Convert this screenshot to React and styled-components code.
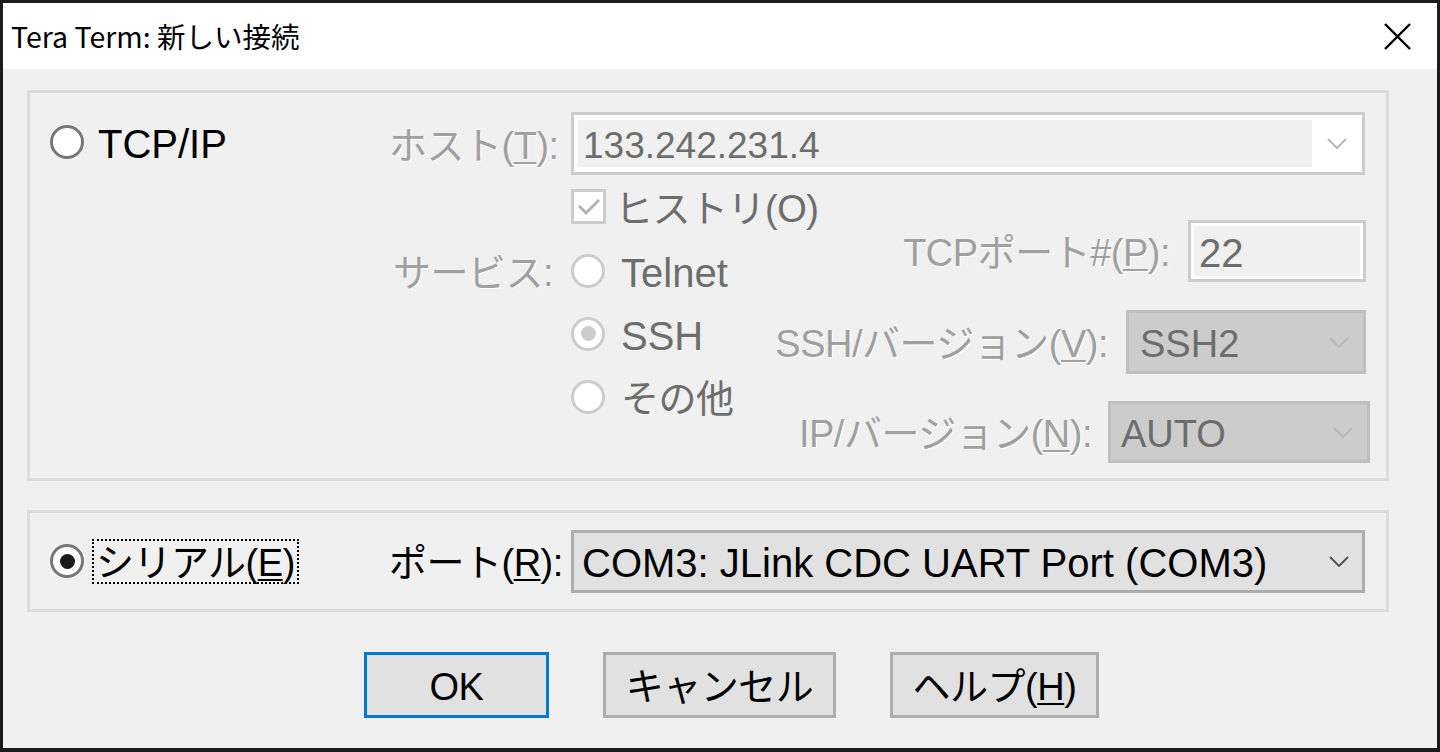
import React from 'react';
import styled, { createGlobalStyle } from 'styled-components';

const FONT = `"Liberation Sans", "Noto Sans CJK JP", sans-serif`;

const Global = createGlobalStyle`
  html, body { margin: 0; padding: 0; width: 1440px; height: 752px; overflow: hidden; background: #1c1c1c; }
  #root { width: 1440px; height: 752px; }
`;

const Window = styled.div`
  box-sizing: border-box;
  width: 1440px;
  height: 752px;
  border: 3px solid #1c1c1c;
  border-bottom-width: 4px;
  display: flex;
  flex-direction: column;
  font-family: ${FONT};
  font-size: 38px;
  color: #000;
`;

const TitleBar = styled.div`
  height: 66px;
  flex: none;
  background: #fff;
  display: flex;
  align-items: center;
  justify-content: space-between;
  padding: 0 26px 0 8px;
`;

const Title = styled.span`
  font-family: "Noto Sans CJK JP", sans-serif;
  font-size: 28.5px;
  line-height: 1;
  color: #000;
`;

const CloseBtn = styled.svg`
  width: 27px;
  height: 27px;
  display: block;
`;

const Body = styled.div`
  flex: 1;
  background: #f0f0f0;
  padding: 21px 48px 0 24px;
  display: flex;
  flex-direction: column;
`;

const Group = styled.div`
  box-sizing: border-box;
  border: 3px solid #dcdcdc;
  height: ${(p) => p.$h}px;
  margin-top: ${(p) => p.$mt || 0}px;
  display: flex;
  align-items: ${(p) => p.$align || 'stretch'};
`;

const LeftCol = styled.div`
  width: 359px;
  flex: none;
  box-sizing: border-box;
  padding-left: 20px;
  padding-top: ${(p) => p.$pt || 0}px;
  display: flex;
  align-items: ${(p) => (p.$pt ? 'flex-start' : 'center')};
`;

const RightCol = styled.div`
  flex: 1;
  display: flex;
  flex-direction: column;
  padding-top: 19px;
`;

const Row = styled.div`
  display: flex;
  align-items: center;
  height: ${(p) => p.$h}px;
  margin-top: ${(p) => p.$mt || 0}px;
  padding-left: ${(p) => p.$pl || 0}px;
  margin-right: ${(p) => p.$mr || 0}px;
  gap: ${(p) => p.$gap || 0}px;
`;

const Label = styled.span`
  white-space: nowrap;
  line-height: 1;
  padding-top: 4px;
  color: ${(p) => (p.$disabled ? '#a0a0a0' : '#000')};
  text-shadow: ${(p) => (p.$disabled ? '1px 1px 0 #fff' : 'none')};
  letter-spacing: -0.5px;
`;

const FieldLabel = styled(Label)`
  width: 164px;
  flex: none;
  text-align: right;
  margin-right: 18px;
`;

const Under = styled.span`
  text-decoration: underline;
  text-decoration-thickness: 2px;
  text-underline-offset: 3px;
`;

const OptionText = styled.span`
  white-space: nowrap;
  line-height: 1;
  padding-top: 4px;
  font-size: ${(p) => (p.$latin ? 40 : 38)}px;
  color: ${(p) => (p.$disabled ? '#6d6d6d' : '#000')};
  letter-spacing: ${(p) => (p.$latin ? 0 : -0.5)}px;
`;

const RadioItem = styled.div`
  display: flex;
  align-items: center;
  gap: ${(p) => p.$gap || 14}px;
  height: ${(p) => p.$h || 40}px;
`;

const RadioCircle = styled.span`
  box-sizing: border-box;
  width: 34px;
  height: 34px;
  flex: none;
  border-radius: 50%;
  border: 3px solid ${(p) => (p.$disabled ? '#cccccc' : '#777777')};
  background: #fff;
  display: flex;
  align-items: center;
  justify-content: center;
  &::after {
    content: '';
    display: ${(p) => (p.$checked ? 'block' : 'none')};
    width: 15px;
    height: 15px;
    border-radius: 50%;
    background: ${(p) => (p.$disabled ? '#cccccc' : '#1a1a1a')};
  }
`;

const FocusLabel = styled.span`
  box-sizing: border-box;
  height: 45px;
  display: flex;
  align-items: center;
  padding: 0 2px;
  border: 2px dotted #000;
  margin-left: -6px;
`;

const CheckBox = styled.span`
  box-sizing: border-box;
  width: 35px;
  height: 35px;
  flex: none;
  border: 3px solid #cccccc;
  background: #fff;
  display: flex;
  align-items: center;
  justify-content: center;
`;

const Combo = styled.div`
  box-sizing: border-box;
  width: ${(p) => p.$w}px;
  height: ${(p) => p.$h}px;
  flex: none;
  border: 3px solid ${(p) => p.$border};
  background: ${(p) => p.$bg};
  display: flex;
  align-items: center;
  padding: ${(p) => p.$pad || '0 13px 0 8px'};
`;

const ComboText = styled.span`
  flex: 1;
  white-space: nowrap;
  line-height: 1;
  padding-top: 4px;
  font-size: ${(p) => p.$size || 40}px;
  color: ${(p) => p.$color || '#000'};
`;

const EditArea = styled.div`
  flex: 1;
  height: 47px;
  background: #f0f0f0;
  display: flex;
  align-items: center;
  padding-left: 5px;
`;

const ArrowArea = styled.div`
  width: 50px;
  display: flex;
  justify-content: center;
`;

const PortBox = styled.div`
  box-sizing: border-box;
  width: 178px;
  height: 62px;
  flex: none;
  border: 3px solid #cccccc;
  outline: 3px solid #fff;
  outline-offset: -6px;
  background: #f0f0f0;
  display: flex;
  align-items: center;
  padding-left: 8px;
`;

const ServiceBlock = styled.div`
  display: flex;
  margin-top: -4px;
`;

const ServiceLabelCol = styled.div`
  width: 164px;
  margin-right: 18px;
  padding-top: 19px;
  flex: none;
  display: flex;
  justify-content: flex-end;
`;

const ServiceLabelBox = styled.div`
  height: 63px;
  display: flex;
  align-items: center;
`;

const RadioCol = styled.div`
  display: flex;
  flex-direction: column;
  padding-top: 19px;
`;

const RightBlock = styled.div`
  flex: 1;
  display: flex;
  flex-direction: column;
  align-items: flex-end;
  padding-right: 20px;
`;

const ButtonRow = styled.div`
  display: flex;
  gap: 54px;
  margin-top: 40px;
  padding-left: 337px;
`;

const Button = styled.div`
  box-sizing: border-box;
  width: ${(p) => p.$w}px;
  height: 66px;
  padding-top: 4px;
  background: #e1e1e1;
  border: ${(p) => (p.$default ? '3px solid #0078d7' : '3px solid #adadad')};
  display: flex;
  align-items: center;
  justify-content: center;
  line-height: 1;
  white-space: nowrap;
  letter-spacing: -0.5px;
`;

const Chevron = ({ color }) => (
  <svg width="20" height="11" viewBox="0 0 20 11">
    <polyline points="1,1 10,10 19,1" fill="none" stroke={color} strokeWidth="2" />
  </svg>
);

const Radio = ({ checked, disabled }) => <RadioCircle $checked={checked} $disabled={disabled} />;

export default function App() {
  return (
    <>
      <Global />
      <Window>
        <TitleBar>
          <Title>Tera Term: 新しい接続</Title>
          <CloseBtn viewBox="0 0 27 27">
            <line x1="1" y1="1" x2="26" y2="26" stroke="#000" strokeWidth="2.4" />
            <line x1="26" y1="1" x2="1" y2="26" stroke="#000" strokeWidth="2.4" />
          </CloseBtn>
        </TitleBar>
        <Body>
          <Group $h={391}>
            <LeftCol $pt={29}>
              <RadioItem>
                <Radio />
                <OptionText $latin>TCP/IP</OptionText>
              </RadioItem>
            </LeftCol>
            <RightCol>
              <Row $h={63}>
                <FieldLabel $disabled>
                  ホスト(<Under>T</Under>):
                </FieldLabel>
                <Combo $w={794} $h={63} $border="#cccccc" $bg="#fff" $pad="5px 0 5px 4px">
                  <EditArea>
                    <ComboText $color="#6d6d6d" $size={37}>133.242.231.4</ComboText>
                  </EditArea>
                  <ArrowArea>
                    <Chevron color="#b8b8b8" />
                  </ArrowArea>
                </Combo>
              </Row>
              <Row $h={35} $mt={14} $pl={182} $gap={9}>
                <CheckBox>
                  <svg width="26" height="20" viewBox="0 0 26 20">
                    <polyline points="3,9 10,16 23,3" fill="none" stroke="#b3b3b3" strokeWidth="3" />
                  </svg>
                </CheckBox>
                <OptionText $disabled>ヒストリ(O)</OptionText>
              </Row>
              <ServiceBlock>
                <ServiceLabelCol>
                  <ServiceLabelBox>
                    <Label $disabled>サービス:</Label>
                  </ServiceLabelBox>
                </ServiceLabelCol>
                <RadioCol>
                  <RadioItem $h={63} $gap={16}>
                    <Radio disabled />
                    <OptionText $disabled $latin>Telnet</OptionText>
                  </RadioItem>
                  <RadioItem $h={63} $gap={16}>
                    <Radio disabled checked />
                    <OptionText $disabled $latin>SSH</OptionText>
                  </RadioItem>
                  <RadioItem $h={63} $gap={16}>
                    <Radio disabled />
                    <OptionText $disabled>その他</OptionText>
                  </RadioItem>
                </RadioCol>
                <RightBlock>
                  <Row $h={62} $gap={18}>
                    <Label $disabled>
                      TCPポート#(<Under>P</Under>):
                    </Label>
                    <PortBox>
                      <OptionText $disabled $latin>22</OptionText>
                    </PortBox>
                  </Row>
                  <Row $h={64} $mt={28} $gap={18}>
                    <Label $disabled>
                      SSH/バージョン(<Under>V</Under>):
                    </Label>
                    <Combo $w={240} $h={64} $border="#bfbfbf" $bg="#cccccc" $pad="0 14px 0 11px">
                      <ComboText $color="#6d6d6d" $size={38}>SSH2</ComboText>
                      <Chevron color="#b8b8b8" />
                    </Combo>
                  </Row>
                  <Row $h={62} $mt={27} $gap={16} $mr={-4}>
                    <Label $disabled>
                      IP/バージョン(<Under>N</Under>):
                    </Label>
                    <Combo $w={262} $h={62} $border="#bfbfbf" $bg="#cccccc" $pad="0 14px 0 10px">
                      <ComboText $color="#6d6d6d" $size={38}>AUTO</ComboText>
                      <Chevron color="#b8b8b8" />
                    </Combo>
                  </Row>
                </RightBlock>
              </ServiceBlock>
            </RightCol>
          </Group>
          <Group $h={102} $mt={29} $align="center">
            <LeftCol>
              <RadioItem>
                <Radio checked />
                <FocusLabel>
                  <OptionText>
                    シリアル(<Under>E</Under>)
                  </OptionText>
                </FocusLabel>
              </RadioItem>
            </LeftCol>
            <Row $h={63}>
              <FieldLabel>
                ポート(<Under>R</Under>):
              </FieldLabel>
              <Combo $w={794} $h={63} $border="#adadad" $bg="#e1e1e1">
                <ComboText>COM3: JLink CDC UART Port (COM3)</ComboText>
                <Chevron color="#555555" />
              </Combo>
            </Row>
          </Group>
          <ButtonRow>
            <Button $w={185} $default>
              OK
            </Button>
            <Button $w={233}>キャンセル</Button>
            <Button $w={209}>
              ヘルプ(<Under>H</Under>)
            </Button>
          </ButtonRow>
        </Body>
      </Window>
    </>
  );
}
